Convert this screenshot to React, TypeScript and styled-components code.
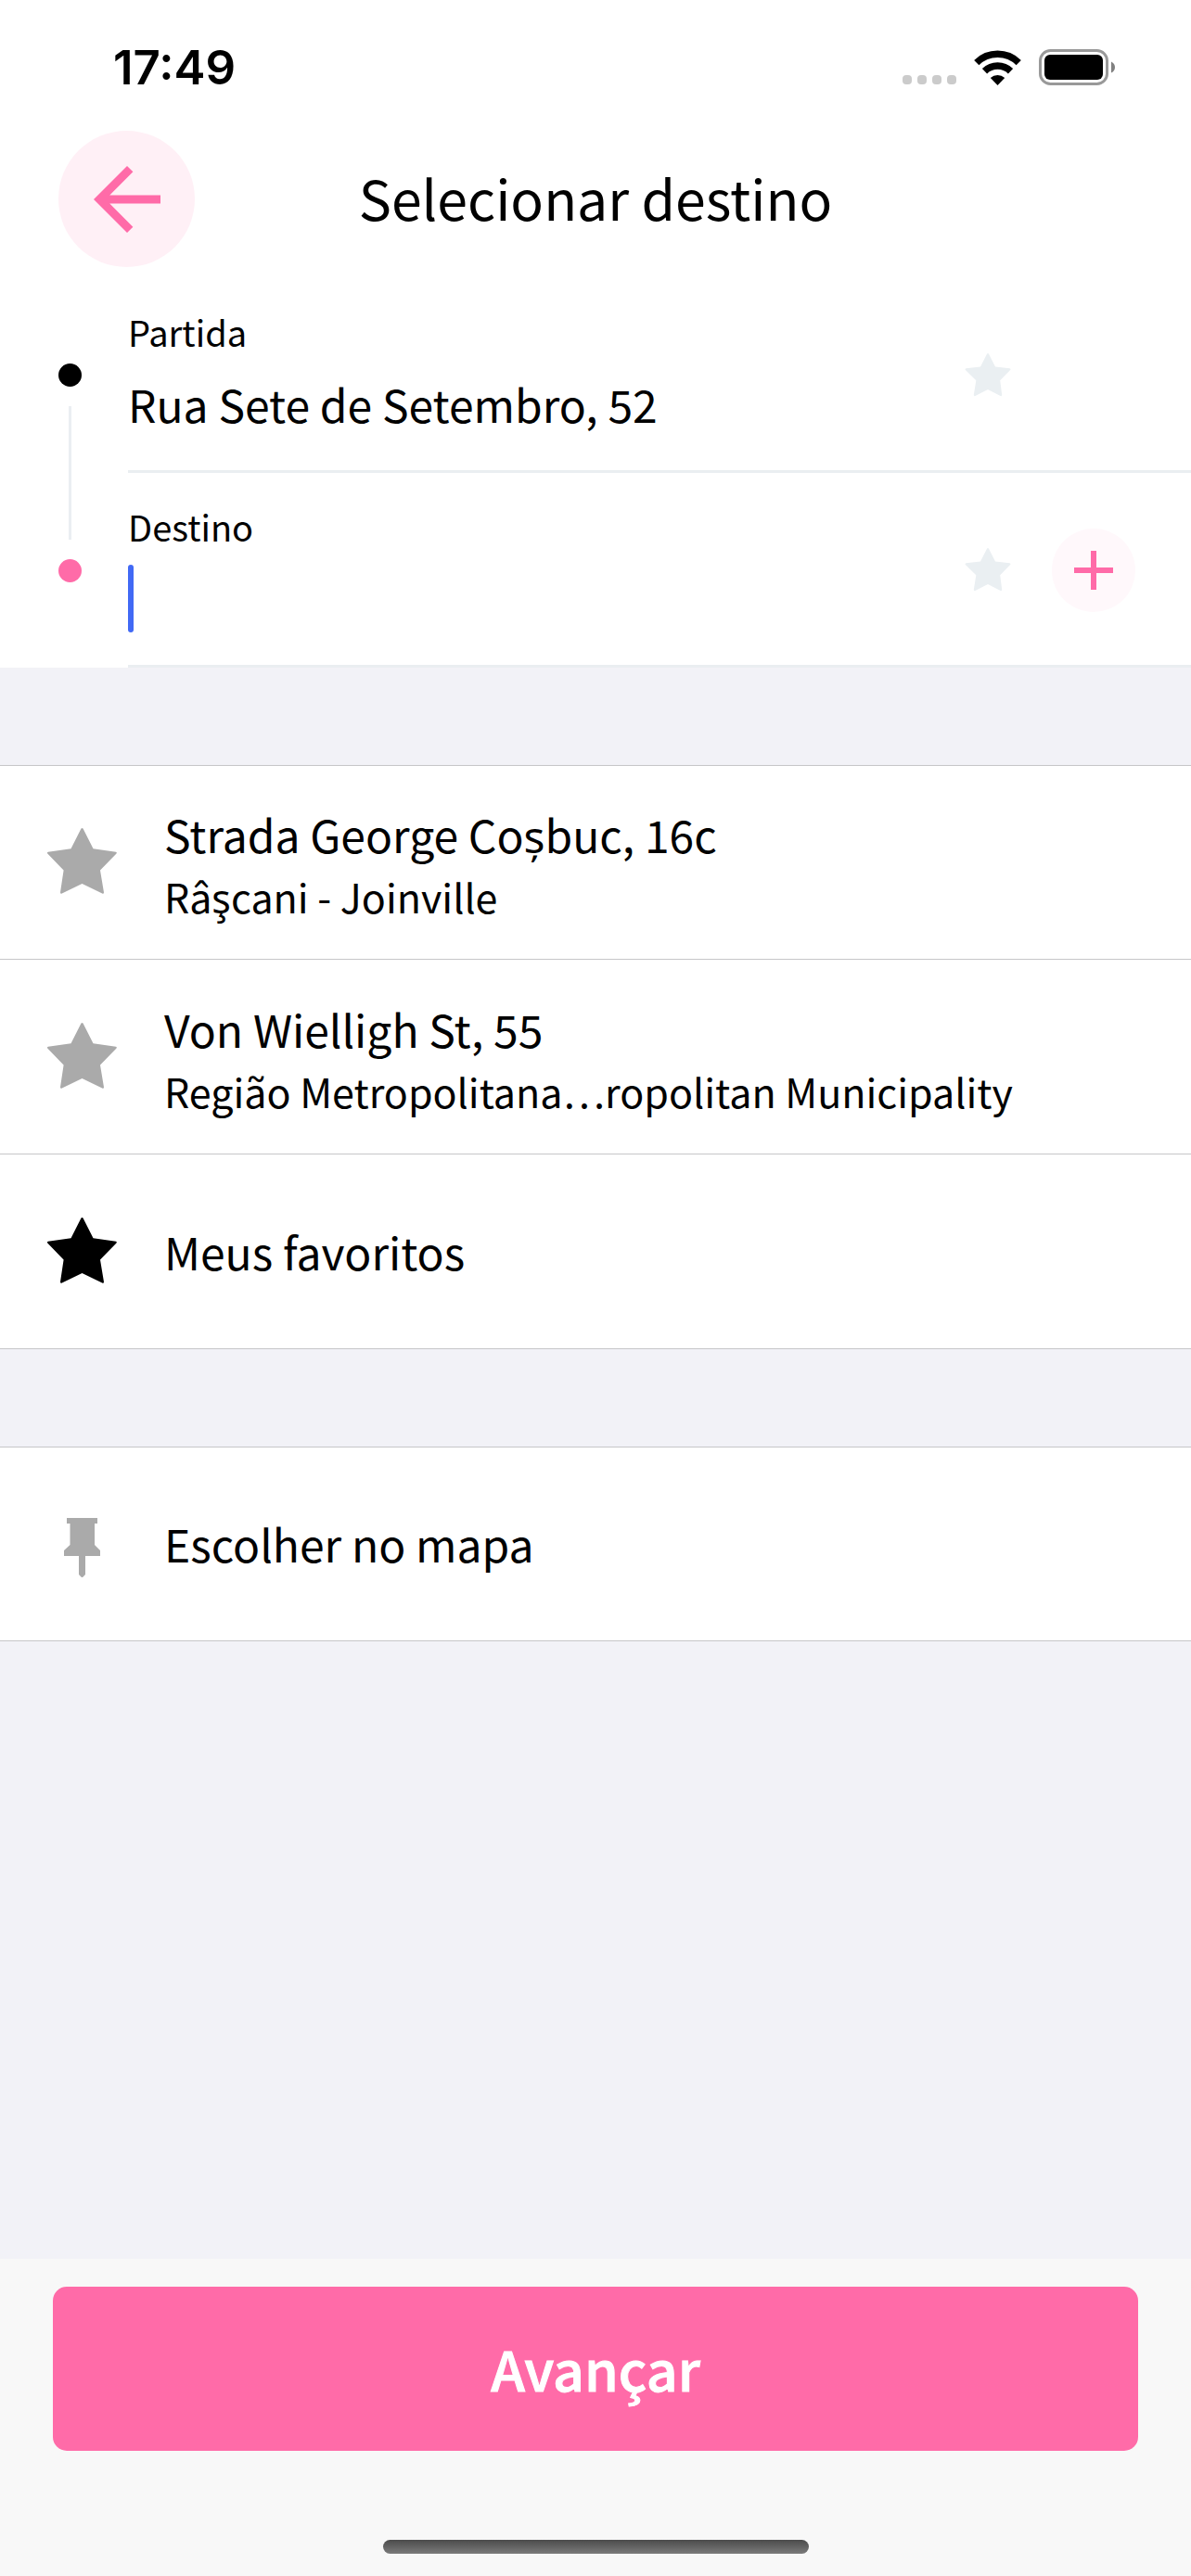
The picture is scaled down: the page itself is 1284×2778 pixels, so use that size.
import React from 'react';
import styled, { createGlobalStyle } from 'styled-components';

const GlobalStyle = createGlobalStyle`
  * { box-sizing: border-box; }
  html, body, #root { height: 100%; }
  body {
    margin: 0;
    background: #f2f2f7;
    color: #000;
    font-family: "Noto Sans CJK SC", "Noto Sans", sans-serif;
  }
  button, input { font: inherit; color: inherit; }
  svg { display: block; flex: none; }
`;

const Screen = styled.div`
  display: flex;
  flex-direction: column;
  min-height: 100%;
`;

const StatusBar = styled.div`
  display: flex;
  align-items: center;
  justify-content: space-between;
  height: 141px;
  padding: 4px 82px 0 122px;
  background: #fff;
`;

const Clock = styled.time`
  font: 600 51px/60px Inter, sans-serif;
`;

const StatusIcons = styled.div`
  display: flex;
  align-items: center;
  gap: 19px;
`;

const Header = styled.header`
  display: grid;
  grid-template-columns: 147px 1fr 147px;
  align-items: start;
  height: 159px;
  padding: 0 63px;
  background: #fff;
`;

const RoundButton = styled.button<{ $size: number; $tint: string }>`
  display: grid;
  place-items: center;
  width: ${(p) => p.$size}px;
  height: ${(p) => p.$size}px;
  padding: 0;
  border: 0;
  border-radius: 50%;
  background: ${(p) => p.$tint};
  color: #ff6ba8;
`;

const Title = styled.h1`
  margin: 0;
  font-size: 59px;
  line-height: 144px;
  font-weight: 400;
  text-align: center;
  white-space: nowrap;
`;

const Route = styled.form`
  display: flex;
  background: #fff;
`;

const Track = styled.div`
  display: flex;
  flex-direction: column;
  align-items: center;
  justify-content: center;
  gap: 21px;
  width: 138px;
  padding-left: 12px;
`;

const Dot = styled.span<{ $color: string }>`
  width: 25px;
  height: 25px;
  border-radius: 50%;
  background: ${(p) => p.$color};
`;

const TrackLine = styled.span`
  width: 3px;
  height: 144px;
  background: #eaeef2;
`;

const Stops = styled.div`
  flex: 1;
  min-width: 0;
`;

const Stop = styled.div`
  display: flex;
  align-items: center;
  height: 210px;
  padding: 3px 60px 0 0;
  border-bottom: 3px solid #eaeef1;
`;

const Field = styled.div`
  display: flex;
  flex-direction: column;
  flex: 1;
  min-width: 0;
`;

const FieldLabel = styled.label`
  font-size: 38px;
  line-height: 60px;
`;

const FieldRow = styled.div`
  display: flex;
  align-items: center;
  height: 94px;
`;

const FieldInput = styled.input`
  flex: 1;
  min-width: 0;
  height: 72px;
  padding: 0;
  border: 0;
  outline: 0;
  background: transparent;
  font-size: 48px;
`;

const Caret = styled.span`
  width: 6px;
  height: 73px;
  border-radius: 3px;
  background: #4169f5;
`;

const StarButton = styled.button`
  display: grid;
  place-items: center;
  width: 138px;
  height: 90px;
  padding: 0;
  border: 0;
  background: none;
  color: #eaeff2;
`;

const Slot = styled.div`
  width: 90px;
`;

const Group = styled.ul`
  margin: 105px 0 0;
  padding: 0;
  list-style: none;
  background: #fff;
  border-top: 1px solid #c6c6c8;
`;

const Entry = styled.li`
  height: 210px;
  border-bottom: 1px solid #c6c6c8;

  &:first-child { height: 209px; }
`;

const EntryButton = styled.button<{ $color: string }>`
  display: flex;
  align-items: center;
  width: 100%;
  height: 100%;
  padding: 0 43px;
  border: 0;
  background: none;
  text-align: left;

  svg { color: ${(p) => p.$color}; }
`;

const EntryText = styled.span`
  display: flex;
  flex-direction: column;
  padding: 0 0 2px 44px;
  min-width: 0;
`;

const EntryTitle = styled.span`
  font-size: 48px;
  line-height: 74px;
`;

const EntryDetail = styled.span`
  font-size: 43px;
  line-height: 60px;
  white-space: nowrap;
`;

const Footer = styled.footer`
  display: flex;
  flex-direction: column;
  align-items: center;
  gap: 96px;
  margin-top: auto;
  padding: 30px 57px 24px;
  background: #f8f8f8;
`;

const NextButton = styled.button`
  width: 100%;
  height: 177px;
  padding: 0 0 2px;
  border: 0;
  border-radius: 15px;
  background: #ff6ba8;
  color: #fff;
  font-size: 59px;
  font-weight: 500;
  -webkit-text-stroke: 1px #fff;
`;

const HomeIndicator = styled.div`
  width: 459px;
  height: 15px;
  border-radius: 8px;
  background: linear-gradient(#4b4b4b, #7b7b7b);
`;

const SignalDots = () => (
  <svg width="58" height="38" viewBox="0 0 58 38" fill="#cbcbcb">
    {[0, 16, 32, 48].map((x) => (
      <rect key={x} x={x} y="27" width="10" height="10" rx="4" />
    ))}
  </svg>
);

const Wifi = () => (
  <svg width="51" height="38" viewBox="0 0 51 38">
    <g fill="none" stroke="#000" strokeWidth="7.5">
      <path d="M2.8 13.6a32.5 32.5 0 0 1 45.4 0" />
      <path d="M11.5 22.8a20 20 0 0 1 28 0" />
    </g>
    <path d="M17.8 30a11.5 11.5 0 0 1 15.4 0L25.5 38z" />
  </svg>
);

const Battery = () => (
  <svg width="82" height="39" viewBox="0 0 82 39">
    <rect x="1.5" y="1.5" width="72" height="36" rx="11" fill="none" stroke="#999" strokeWidth="3" />
    <rect x="6" y="6" width="63" height="27" rx="6" />
    <path d="M78 13.5q4 2 4 6t-4 6z" fill="#808080" />
  </svg>
);

const Arrow = () => (
  <svg width="108" height="108" viewBox="0 0 24 24" fill="currentColor">
    <path d="M20 11H7.83l5.59-5.59L12 4l-8 8 8 8 1.41-1.41L7.83 13H20z" />
  </svg>
);

const Plus = () => (
  <svg width="42" height="42" viewBox="0 0 42 42" fill="currentColor">
    <path d="M18 0h6v18h18v6H24v18h-6V24H0v-6h18z" />
  </svg>
);

const SmallStar = () => (
  <svg width="50" height="50" viewBox="0 0 50 50" fill="currentColor">
    <path d="M24 1.7q1-1.4 2 0L33 15.5l15.5 1.7q1.8.6.4 2L38.2 30.2 40.2 46q-.2 1.600-1.600 1L25 40 11.400 47q-1.400.6-1.600-1L12.300 30.200 1.100 19.200q-1.400-1.400.4-2L17 15.500z" />
  </svg>
);

const BigStar = () => (
  <svg width="90" height="90" viewBox="0 0 90 90" fill="currentColor">
    <path d="M44.500 8.400q1-.8 2 0L57.500 30.200 82 33.800q1.600.4.500 1.800L65 53.500 69 77.600q-.2 1.800-1.800 1L45.500 68 23.800 78.600q-1.600.8-1.800-1L25.600 53.500 8.200 35.600q-1-1.400.6-1.800L33.500 30.200z" />
  </svg>
);

const Pin = () => (
  <svg width="90" height="90" viewBox="0 0 90 90" fill="currentColor">
    <path d="M29 17h33v6h-3v23l6 6v6H49v20l-3 3h-1l-3-3V58H26v-6l6.500-6V23H29z" />
  </svg>
);

const places = [
  { title: 'Strada George Coșbuc, 16c', detail: 'Râşcani - Joinville', color: '#aaa' },
  { title: 'Von Wielligh St, 55', detail: 'Região Metropolitana…ropolitan Municipality', color: '#aaa' },
  { title: 'Meus favoritos', detail: '', color: '#000' },
];

export default function App() {
  return (
    <Screen>
      <GlobalStyle />
      <StatusBar>
        <Clock>17:49</Clock>
        <StatusIcons>
          <SignalDots />
          <Wifi />
          <Battery />
        </StatusIcons>
      </StatusBar>
      <Header>
        <RoundButton $size={147} $tint="#fff0f6" aria-label="Voltar">
          <Arrow />
        </RoundButton>
        <Title>Selecionar destino</Title>
      </Header>
      <Route>
        <Track>
          <Dot $color="#000" />
          <TrackLine />
          <Dot $color="#ff6ba8" />
        </Track>
        <Stops>
          <Stop>
            <Field>
              <FieldLabel htmlFor="from">Partida</FieldLabel>
              <FieldRow>
                <FieldInput id="from" defaultValue="Rua Sete de Setembro, 52" />
              </FieldRow>
            </Field>
            <StarButton type="button" aria-label="Favoritar partida">
              <SmallStar />
            </StarButton>
            <Slot />
          </Stop>
          <Stop>
            <Field>
              <FieldLabel htmlFor="to">Destino</FieldLabel>
              <FieldRow>
                <Caret />
                <FieldInput id="to" />
              </FieldRow>
            </Field>
            <StarButton type="button" aria-label="Favoritar destino">
              <SmallStar />
            </StarButton>
            <RoundButton type="button" $size={90} $tint="#fff8fb" aria-label="Adicionar parada">
              <Plus />
            </RoundButton>
          </Stop>
        </Stops>
      </Route>
      <Group>
        {places.map((place) => (
          <Entry key={place.title}>
            <EntryButton $color={place.color}>
              <BigStar />
              <EntryText>
                <EntryTitle>{place.title}</EntryTitle>
                {place.detail && <EntryDetail>{place.detail}</EntryDetail>}
              </EntryText>
            </EntryButton>
          </Entry>
        ))}
      </Group>
      <Group>
        <Entry>
          <EntryButton $color="#aaa">
            <Pin />
            <EntryText>
              <EntryTitle>Escolher no mapa</EntryTitle>
            </EntryText>
          </EntryButton>
        </Entry>
      </Group>
      <Footer>
        <NextButton>Avançar</NextButton>
        <HomeIndicator />
      </Footer>
    </Screen>
  );
}
